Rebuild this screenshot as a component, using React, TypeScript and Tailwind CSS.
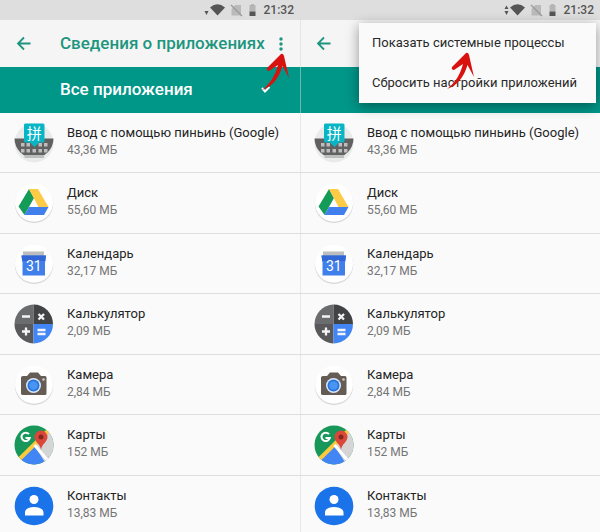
import React from "react";

type IconProps = { className?: string };

function PinyinIcon() {
  return (
    <svg viewBox="0 0 40 40" className="size-10 shrink-0" aria-hidden="true">
      <circle cx="20" cy="20" r="19.5" fill="#e9ebeb" />
      <path d="M0.5 15.5H39.5A19.5 19.5 0 1 1 0.5 15.5Z" fill="#616161" />
      <g fill="#bdbdbd">
        <rect x="7" y="20" width="3.5" height="3.5" />
        <rect x="12.5" y="20" width="3.5" height="3.5" />
        <rect x="24.5" y="20" width="3.5" height="3.5" />
        <rect x="30" y="20" width="3.5" height="3.5" />
        <rect x="7" y="26" width="3.5" height="3.5" />
        <rect x="12.5" y="26" width="3.5" height="3.5" />
        <rect x="18.5" y="26" width="3.5" height="3.5" />
        <rect x="24.5" y="26" width="3.5" height="3.5" />
        <rect x="30" y="26" width="3.5" height="3.5" />
        <rect x="10.5" y="32" width="19.5" height="3" />
      </g>
      <path d="M11 .5H29Q30.500 .5 30.500 2V18Q30.500 19.500 29 19.500H25L20.500 24L16 19.500H11.500Q10 19.500 10 18V2Q10 .5 11 .5Z" fill="#08b5c5" />
      <text x="20.200" y="16" fontSize="15" textAnchor="middle" fill="#fff" className="font-['Noto_Sans_CJK_SC',sans-serif]">拼</text>
    </svg>
  );
}

function Disc() {
  return (
    <>
      <circle cx="20" cy="20.8" r="19.2" fill="#d6d6d6" />
      <circle cx="20" cy="19.8" r="19" fill="#fff" />
    </>
  );
}

function DriveIcon() {
  return (
    <svg viewBox="0 0 40 40" className="size-10 shrink-0" aria-hidden="true">
      <Disc />
      <path d="M15 6L20 15L10.500 32L4.500 23.500Z" fill="#149b57" />
      <path d="M15 6H24L34.500 24H24.500Z" fill="#fdcb45" />
      <path d="M15 24H34.500L30 32H10.500Z" fill="#4180ec" />
    </svg>
  );
}

function CalendarIcon() {
  return (
    <svg viewBox="0 0 40 40" className="size-10 shrink-0" aria-hidden="true">
      <Disc />
      <path d="M9 7.500H30V12H9Z" fill="#bdbdbd" />
      <path d="M7.500 11.500H32L31 19V31.500H8.500V19Z" fill="#4180ea" />
      <path d="M7.500 11.500H32L31.300 17H8.200Z" fill="#3367d6" />
      <text x="19.800" y="27" fontSize="14" textAnchor="middle" fill="#fff" className="font-[Roboto,sans-serif]">31</text>
    </svg>
  );
}

function CalculatorIcon() {
  return (
    <svg viewBox="0 0 40 40" className="size-10 shrink-0" aria-hidden="true">
      <path d="M19.500 20V.5A19.500 19.500 0 0 0 .5 20Z" fill="#6b6c6e" />
      <path d="M19.500 20V.5A19.500 19.500 0 0 1 39 20Z" fill="#424345" />
      <path d="M19.500 20V39.500A19.500 19.500 0 0 1 .5 20Z" fill="#59595b" />
      <path d="M19.500 20V39.500A19.500 19.500 0 0 0 39 20Z" fill="#4285f4" />
      <path d="M8 12.500H16M8 27.500H16M12 23.500V31.500M23.500 26H31.500M23.500 30H31.500M24.500 10L30 15.500M30 10L24.500 15.500" stroke="#f4f4f4" strokeWidth="2.300" />
    </svg>
  );
}

function CameraIcon() {
  return (
    <svg viewBox="0 0 40 40" className="size-10 shrink-0" aria-hidden="true">
      <Disc />
      <path d="M9 11H13L16 7.500H24L27 11H31Q32.500 11 32.500 12.500V28.500Q32.500 30 31 30H9Q7 30 7 28.500V12.500Q7 11 9 11Z" fill="#655c56" />
      <circle cx="19.500" cy="20.500" r="7.500" fill="#dce9fb" />
      <circle cx="19.500" cy="20.500" r="6" fill="#2575dd" />
      <circle cx="19.500" cy="20.500" r="4.300" fill="#4a94f4" />
      <circle cx="29.500" cy="14.500" r="1.300" fill="#d0cac5" />
    </svg>
  );
}

function MapsIcon() {
  return (
    <svg viewBox="0 0 40 40" className="size-10 shrink-0" aria-hidden="true">
      <defs>
        <clipPath id="maps-disc"><circle cx="20" cy="20" r="19.5" /></clipPath>
      </defs>
      <g clipPath="url(#maps-disc)">
        <path d="M0 0H40V40H0Z" fill="#17975a" />
        <path d="M35 6L40 3V40H31L20 20Z" fill="#d5d5d5" />
        <path d="M20 20L4 36L10 42H34Z" fill="#4285f4" />
        <path d="M37 3L3 36.500" stroke="#fcca3e" strokeWidth="4" />
        <path d="M20.500 20L36 38" stroke="#fff" strokeWidth="3" />
      </g>
      <path d="M15 9.200A4.200 4.200 0 1 0 15.800 13H11.500" fill="none" stroke="#fff" strokeWidth="2" />
      <path d="M27 5.500A6.500 6.500 0 0 1 33.500 12C33.500 17 27.500 19 27 25C26.500 19 20.500 17 20.500 12A6.500 6.500 0 0 1 27 5.500Z" fill="#dc473b" />
      <circle cx="27" cy="12" r="2.500" fill="#80291f" />
    </svg>
  );
}

function ContactsIcon() {
  return (
    <svg viewBox="0 0 40 40" className="size-10 shrink-0" aria-hidden="true">
      <circle cx="20" cy="20" r="19.3" fill="#1a73e8" />
      <circle cx="20" cy="13.5" r="4.500" fill="#fff" />
      <path d="M11 29.500V26.500C11 23 15 21 20 21S29.500 23 29.500 26.500V29.500Z" fill="#fff" />
    </svg>
  );
}

const apps = [
  { name: "Ввод с помощью пиньинь (Google)", size: "43,36 МБ", Icon: PinyinIcon },
  { name: "Диск", size: "55,60 МБ", Icon: DriveIcon },
  { name: "Календарь", size: "32,17 МБ", Icon: CalendarIcon },
  { name: "Калькулятор", size: "2,09 МБ", Icon: CalculatorIcon },
  { name: "Камера", size: "2,84 МБ", Icon: CameraIcon },
  { name: "Карты", size: "152 МБ", Icon: MapsIcon },
  { name: "Контакты", size: "13,83 МБ", Icon: ContactsIcon },
];

function StatusBar({ bothWays }: { bothWays: boolean }) {
  return (
    <header className="flex h-5 items-center justify-end bg-[#dedede] pr-1.5 text-[#555]">
      <svg viewBox="0 0 54 14" className="mr-1.5 h-3.5 w-[54px]" fill="currentColor" aria-hidden="true">
        {bothWays && <path d="M.5 6L2.500 2.500L4.500 6Z" />}
        <path d="M.5 8H4.500L2.500 12Z" />
        <path d="M6 4.500Q13.500 -2 21 4.500L13.500 12.500Z" />
        <path d="M31 2H37V12.500H27.500V6Z" fill="#bababa" />
        <path d="M27 2L38 13" stroke="#999" strokeWidth="1.200" />
        <path d="M45.500 2H47V1H50V2H51.500V8.500H45.500Z" fill="#b5b5b5" />
        <path d="M45.500 8.500H51.500V13H45.500Z" />
      </svg>
      <time className="text-[12px] leading-5 font-medium">21:32</time>
    </header>
  );
}

function MarkerArrow({ className }: IconProps) {
  return (
    <svg viewBox="0 0 30 40" className={className} aria-hidden="true">
      <path d="M1 37C9 31 14 23 17 12L8 18Q5 18 6 15L20 1Q22 0 23 3L28 25L21.500 13C18 25 11 34 1 37Z" fill="#d8130f" />
    </svg>
  );
}

function OverflowMenu() {
  return (
    <div role="menu" className="absolute top-[23px] right-1 left-[59px] bg-[#fafafa] shadow-[0_3px_12px_rgba(0,0,0,0.4)]">
      {["Показать системные процессы", "Сбросить настройки приложений"].map((label) => (
        <button key={label} role="menuitem" type="button" className="block h-10 w-full pl-[13px] text-left text-[13px] whitespace-nowrap text-[#292929]">
          {label}
        </button>
      ))}
    </div>
  );
}

function Phone({ menuOpen = false }: { menuOpen?: boolean }) {
  return (
    <section className="relative min-w-0 flex-1 bg-[#fafafa]">
      <StatusBar bothWays={menuOpen} />
      <div className="flex h-[47px] items-center bg-[#f5f5f5] pr-3 pl-4 text-[#1d957f]">
        <button type="button" aria-label="Назад" className="mr-7">
          <svg viewBox="0 0 16 16" className="size-4" fill="none" stroke="currentColor" strokeWidth="1.800" aria-hidden="true">
            <path d="M14.500 7.500H2M8 1.500L2 7.500L8 13.500" />
          </svg>
        </button>
        {!menuOpen && (
          <>
            <h1 className="flex-1 text-[17px] font-medium whitespace-nowrap">Сведения о приложениях</h1>
            <button type="button" aria-label="Ещё">
              <svg viewBox="0 0 14 16" className="h-4 w-3.5" fill="currentColor" aria-hidden="true">
                <circle cx="7" cy="3" r="1.7" /><circle cx="7" cy="8" r="1.7" /><circle cx="7" cy="13" r="1.7" />
              </svg>
            </button>
          </>
        )}
      </div>
      <button type="button" aria-label="Все приложения" className="flex h-[46px] w-full items-center justify-between bg-[#009688] pr-7 pl-[60px] text-white">
        {!menuOpen && (
          <>
            <span className="text-[17px] font-medium">Все приложения</span>
            <svg viewBox="0 0 12 8" className="h-2 w-3" fill="none" stroke="currentColor" strokeWidth="2" aria-hidden="true">
              <path d="M2 2L5 5.500L9.500 1" />
            </svg>
          </>
        )}
      </button>
      <ul>
        {apps.map(({ name, size, Icon }) => (
          <li key={name} className="flex h-[60px] items-center gap-[13px] border-b border-[#dedede] pl-3.5 even:h-[61px]">
            <Icon />
            <div className="pb-1">
              <p className="text-[13px] leading-[18px] whitespace-nowrap text-[#242424]">{name}</p>
              <p className="text-[12px] leading-4 text-[#757575]">{size}</p>
            </div>
          </li>
        ))}
      </ul>
      {menuOpen ? (
        <>
          <div className="absolute top-5 bottom-0 left-0 w-px bg-[#d6d6d6]/50" />
          <OverflowMenu />
          <MarkerArrow className="absolute top-[52px] left-[146px] h-10 w-[30px]" />
        </>
      ) : (
        <MarkerArrow className="absolute top-[53px] right-[9px] h-10 w-[30px]" />
      )}
    </section>
  );
}

export default function App() {
  return (
    <main className="flex h-screen overflow-hidden bg-[#fafafa] font-[Roboto,sans-serif]">
      <Phone />
      <Phone menuOpen />
    </main>
  );
}
